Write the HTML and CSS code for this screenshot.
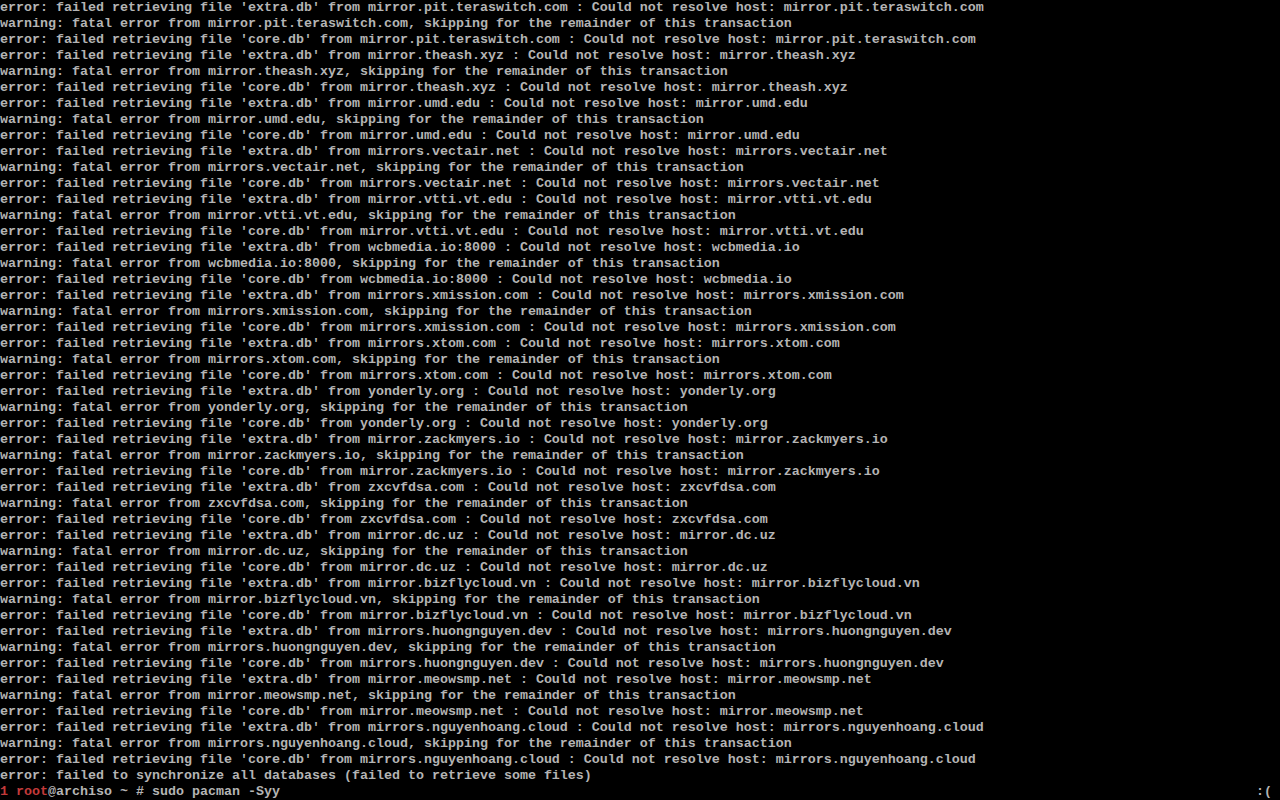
FILE: index.html
```html
<!DOCTYPE html>
<html>
<head>
<meta charset="utf-8">
<link rel="stylesheet" href="styles.css">
</head>
<body>
<div class="console">
<div class="line">error: failed retrieving file 'extra.db' from mirror.pit.teraswitch.com : Could not resolve host: mirror.pit.teraswitch.com</div>
<div class="line">warning: fatal error from mirror.pit.teraswitch.com, skipping for the remainder of this transaction</div>
<div class="line">error: failed retrieving file 'core.db' from mirror.pit.teraswitch.com : Could not resolve host: mirror.pit.teraswitch.com</div>
<div class="line">error: failed retrieving file 'extra.db' from mirror.theash.xyz : Could not resolve host: mirror.theash.xyz</div>
<div class="line">warning: fatal error from mirror.theash.xyz, skipping for the remainder of this transaction</div>
<div class="line">error: failed retrieving file 'core.db' from mirror.theash.xyz : Could not resolve host: mirror.theash.xyz</div>
<div class="line">error: failed retrieving file 'extra.db' from mirror.umd.edu : Could not resolve host: mirror.umd.edu</div>
<div class="line">warning: fatal error from mirror.umd.edu, skipping for the remainder of this transaction</div>
<div class="line">error: failed retrieving file 'core.db' from mirror.umd.edu : Could not resolve host: mirror.umd.edu</div>
<div class="line">error: failed retrieving file 'extra.db' from mirrors.vectair.net : Could not resolve host: mirrors.vectair.net</div>
<div class="line">warning: fatal error from mirrors.vectair.net, skipping for the remainder of this transaction</div>
<div class="line">error: failed retrieving file 'core.db' from mirrors.vectair.net : Could not resolve host: mirrors.vectair.net</div>
<div class="line">error: failed retrieving file 'extra.db' from mirror.vtti.vt.edu : Could not resolve host: mirror.vtti.vt.edu</div>
<div class="line">warning: fatal error from mirror.vtti.vt.edu, skipping for the remainder of this transaction</div>
<div class="line">error: failed retrieving file 'core.db' from mirror.vtti.vt.edu : Could not resolve host: mirror.vtti.vt.edu</div>
<div class="line">error: failed retrieving file 'extra.db' from wcbmedia.io:8000 : Could not resolve host: wcbmedia.io</div>
<div class="line">warning: fatal error from wcbmedia.io:8000, skipping for the remainder of this transaction</div>
<div class="line">error: failed retrieving file 'core.db' from wcbmedia.io:8000 : Could not resolve host: wcbmedia.io</div>
<div class="line">error: failed retrieving file 'extra.db' from mirrors.xmission.com : Could not resolve host: mirrors.xmission.com</div>
<div class="line">warning: fatal error from mirrors.xmission.com, skipping for the remainder of this transaction</div>
<div class="line">error: failed retrieving file 'core.db' from mirrors.xmission.com : Could not resolve host: mirrors.xmission.com</div>
<div class="line">error: failed retrieving file 'extra.db' from mirrors.xtom.com : Could not resolve host: mirrors.xtom.com</div>
<div class="line">warning: fatal error from mirrors.xtom.com, skipping for the remainder of this transaction</div>
<div class="line">error: failed retrieving file 'core.db' from mirrors.xtom.com : Could not resolve host: mirrors.xtom.com</div>
<div class="line">error: failed retrieving file 'extra.db' from yonderly.org : Could not resolve host: yonderly.org</div>
<div class="line">warning: fatal error from yonderly.org, skipping for the remainder of this transaction</div>
<div class="line">error: failed retrieving file 'core.db' from yonderly.org : Could not resolve host: yonderly.org</div>
<div class="line">error: failed retrieving file 'extra.db' from mirror.zackmyers.io : Could not resolve host: mirror.zackmyers.io</div>
<div class="line">warning: fatal error from mirror.zackmyers.io, skipping for the remainder of this transaction</div>
<div class="line">error: failed retrieving file 'core.db' from mirror.zackmyers.io : Could not resolve host: mirror.zackmyers.io</div>
<div class="line">error: failed retrieving file 'extra.db' from zxcvfdsa.com : Could not resolve host: zxcvfdsa.com</div>
<div class="line">warning: fatal error from zxcvfdsa.com, skipping for the remainder of this transaction</div>
<div class="line">error: failed retrieving file 'core.db' from zxcvfdsa.com : Could not resolve host: zxcvfdsa.com</div>
<div class="line">error: failed retrieving file 'extra.db' from mirror.dc.uz : Could not resolve host: mirror.dc.uz</div>
<div class="line">warning: fatal error from mirror.dc.uz, skipping for the remainder of this transaction</div>
<div class="line">error: failed retrieving file 'core.db' from mirror.dc.uz : Could not resolve host: mirror.dc.uz</div>
<div class="line">error: failed retrieving file 'extra.db' from mirror.bizflycloud.vn : Could not resolve host: mirror.bizflycloud.vn</div>
<div class="line">warning: fatal error from mirror.bizflycloud.vn, skipping for the remainder of this transaction</div>
<div class="line">error: failed retrieving file 'core.db' from mirror.bizflycloud.vn : Could not resolve host: mirror.bizflycloud.vn</div>
<div class="line">error: failed retrieving file 'extra.db' from mirrors.huongnguyen.dev : Could not resolve host: mirrors.huongnguyen.dev</div>
<div class="line">warning: fatal error from mirrors.huongnguyen.dev, skipping for the remainder of this transaction</div>
<div class="line">error: failed retrieving file 'core.db' from mirrors.huongnguyen.dev : Could not resolve host: mirrors.huongnguyen.dev</div>
<div class="line">error: failed retrieving file 'extra.db' from mirror.meowsmp.net : Could not resolve host: mirror.meowsmp.net</div>
<div class="line">warning: fatal error from mirror.meowsmp.net, skipping for the remainder of this transaction</div>
<div class="line">error: failed retrieving file 'core.db' from mirror.meowsmp.net : Could not resolve host: mirror.meowsmp.net</div>
<div class="line">error: failed retrieving file 'extra.db' from mirrors.nguyenhoang.cloud : Could not resolve host: mirrors.nguyenhoang.cloud</div>
<div class="line">warning: fatal error from mirrors.nguyenhoang.cloud, skipping for the remainder of this transaction</div>
<div class="line">error: failed retrieving file 'core.db' from mirrors.nguyenhoang.cloud : Could not resolve host: mirrors.nguyenhoang.cloud</div>
<div class="line">error: failed to synchronize all databases (failed to retrieve some files)</div>
<div class="line prompt"><span class="left"><span class="red">1 root</span>@archiso ~ # sudo pacman -Syy</span><span class="right">:(</span></div>
</div>
</body>
</html>
```

FILE: styles.css
```css
html, body {
  margin: 0;
  padding: 0;
  background: #000;
  width: 1280px;
  height: 800px;
  overflow: hidden;
}

.console {
  display: flex;
  flex-direction: column;
  font-family: "Liberation Mono", "DejaVu Sans Mono", monospace;
  font-size: 13.3333px;
  line-height: 16px;
  color: #b4b4b4;
  font-weight: bold;
}

.line {
  height: 16px;
  white-space: pre;
}

.prompt {
  display: flex;
  justify-content: space-between;
  padding-right: 8px;
}

.red {
  color: #c23a3a;
}
```
